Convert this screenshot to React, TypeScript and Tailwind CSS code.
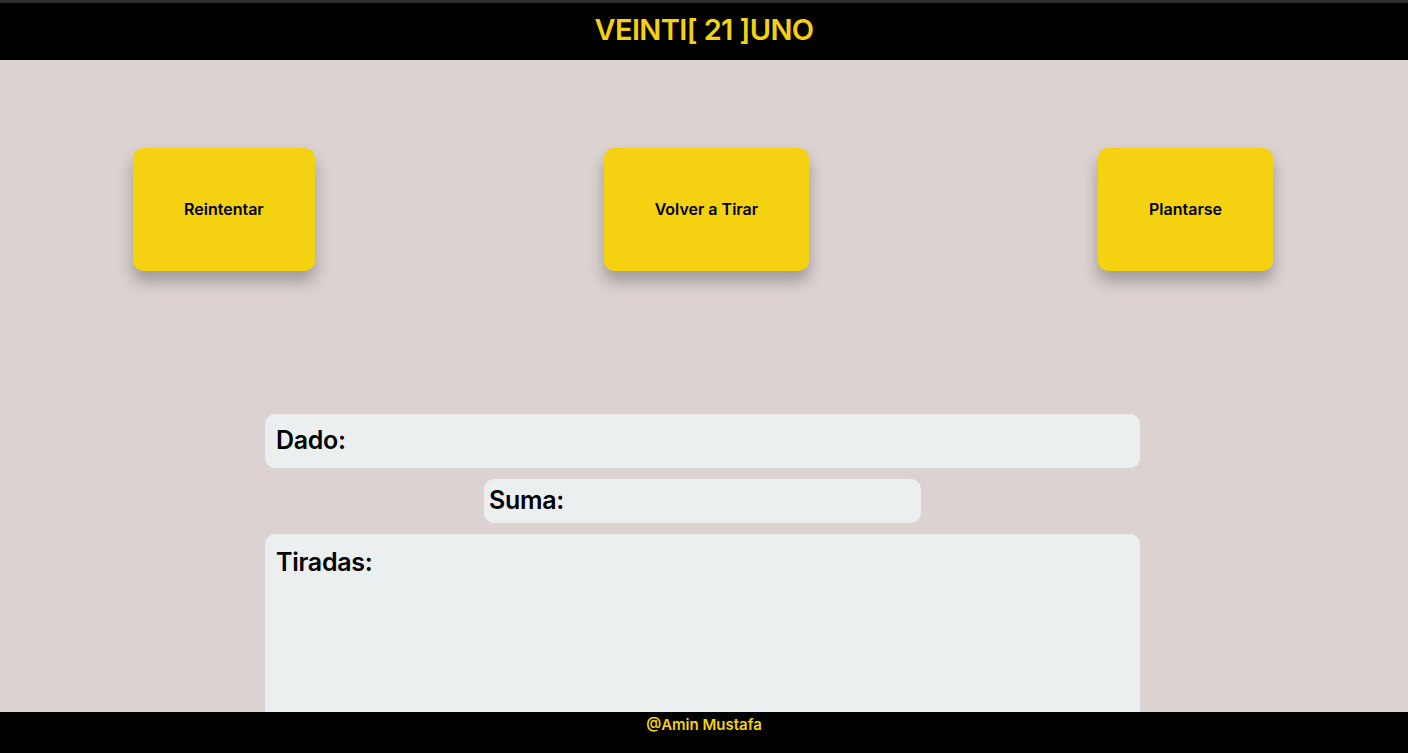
export default function App() {
  const buttons = ["Reintentar", "Volver a Tirar", "Plantarse"];

  return (
    <div
      className="flex h-[753px] flex-col overflow-hidden bg-[#dbd2d1] text-black"
      style={{ fontFamily: "Inter, 'Noto Sans', sans-serif" }}
    >
      {/* Title bar */}
      <div className="h-[3px] bg-[#2e2e2e]" />
      <header className="flex h-[57px] items-center justify-center bg-black pb-[3px]">
        <h1 className="text-[29px] font-semibold tracking-[-0.6px] text-[#f4d211]">
          VEINTI[ 21 ]UNO
        </h1>
      </header>

      <main className="flex flex-1 flex-col overflow-hidden">
        {/* Actions */}
        <div className="mt-[88px] flex justify-between pl-[133px] pr-[135px]">
          {buttons.map((b) => (
            <button
              key={b}
              className="flex h-[123px] items-center rounded-[10px] bg-[#f4d211] px-[51px] pb-[2px] text-[16px] font-semibold shadow-[0_10px_16px_rgba(0,0,0,0.28)]"
            >
              {b}
            </button>
          ))}
        </div>

        {/* Results */}
        <div className="mt-[143px] flex flex-col items-center gap-[11px] pr-[3px]">
          <div className="flex h-[54px] w-[875px] items-center rounded-[10px] bg-[#ebeff0] px-[11px] text-[25px] font-semibold tracking-[-0.3px]">
            Dado:
          </div>
          <div className="flex h-[44px] w-[437px] items-center rounded-[10px] bg-[#ebeff0] px-[5px] text-[25px] font-semibold tracking-[-0.3px]">
            Suma:
          </div>
          <div className="h-[220px] w-[875px] rounded-[10px] bg-[#ebeff0] px-[11px] pt-[10px] text-[25px] font-semibold tracking-[-0.3px]">
            Tiradas:
          </div>
        </div>
      </main>

      <footer className="flex h-[41px] shrink-0 justify-center bg-black pt-[2px]">
        <span className="text-[15px] font-semibold text-[#f4d211]">@Amin Mustafa</span>
      </footer>
    </div>
  );
}
